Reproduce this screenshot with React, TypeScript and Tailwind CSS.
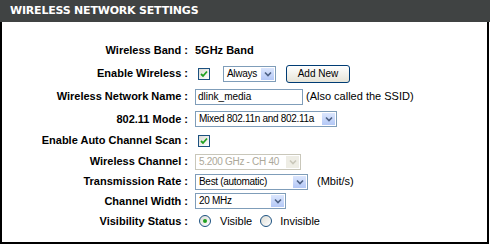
const font = { fontFamily: '"Liberation Sans", Arial, sans-serif' };

const Check = () => (
  <span className="flex h-[12px] w-[12px] items-center justify-center border border-[#1c5180] bg-gradient-to-br from-[#dcdcd5] to-white">
    <svg width="8" height="8" viewBox="0 0 8 8">
      <path d="M1 4 L3 6 L7 1.5" fill="none" stroke="#21a121" strokeWidth="1.8" />
    </svg>
  </span>
);

const Arrow = ({ disabled }: { disabled?: boolean }) => (
  <span
    className={
      "flex h-full w-[15px] shrink-0 items-center justify-center border border-white " +
      (disabled ? "bg-[#eeede5]" : "bg-gradient-to-b from-[#dbe6fd] to-[#b4c8f6]")
    }
  >
    <svg width="8" height="6" viewBox="0 0 8 6">
      <path d="M1 1.5 L4 4.5 L7 1.5" fill="none" stroke={disabled ? "#c9c7ba" : "#4d6185"} strokeWidth="1.6" />
    </svg>
  </span>
);

const Select = ({ w, text, disabled }: { w: string; text: string; disabled?: boolean }) => (
  <div
    className={
      "flex h-[16px] items-stretch border bg-white " +
      w +
      (disabled ? " border-[#c9c7ba] text-[#aca899]" : " border-[#7f9db9] text-black")
    }
  >
    <span className="flex flex-1 items-center overflow-hidden whitespace-nowrap pl-[3px] text-[10px] leading-none tracking-[-0.3px]">
      {text}
    </span>
    <Arrow disabled={disabled} />
  </div>
);

const Radio = ({ on }: { on?: boolean }) => (
  <span className="flex h-[12px] w-[12px] items-center justify-center rounded-full border border-[#1c5180] bg-gradient-to-br from-[#dcdcd5] to-white">
    {on && <span className="h-[4px] w-[4px] rounded-full bg-[#21a121]" />}
  </span>
);

const Row = ({ h, label, children }: { h: string; label: string; children: React.ReactNode }) => (
  <div className={"grid grid-cols-[186px_1fr] items-center gap-x-[7px] " + h}>
    <div className="text-right text-[11px] font-bold whitespace-nowrap">{label}</div>
    <div className="flex items-center text-[11px]">{children}</div>
  </div>
);

export default function App() {
  return (
    <div className="h-[244px] w-[490px] bg-white text-black" style={font}>
      <div className="flex h-[22px] items-center bg-[#404343] pl-[10px]">
        <span
          className="text-[11px] font-bold tracking-[-0.2px] text-white"
          style={{ fontFamily: '"DejaVu Sans", Verdana, sans-serif' }}
        >
          WIRELESS NETWORK SETTINGS
        </span>
      </div>
      <div className="h-[222px] w-[489px] border-x-2 border-b-2 border-black pt-[16px]">
        <Row h="h-[24px]" label="Wireless Band :">
          <span className="font-bold">5GHz Band</span>
        </Row>
        <Row h="h-[23px]" label="Enable Wireless :">
          <span className="ml-[3px]">
            <Check />
          </span>
          <span className="ml-[13px]">
            <Select w="w-[53px]" text="Always" />
          </span>
          <button className="ml-[10px] h-[18px] w-[64px] rounded-[3px] border border-[#003c74] bg-gradient-to-b from-white to-[#e6e4d8] text-[10px]">
            Add New
          </button>
        </Row>
        <Row h="h-[23px]" label="Wireless Network Name :">
          <div className="flex h-[16px] w-[108px] items-center border border-[#7f9db9] pl-[2px] text-[10px]">
            dlink_media
          </div>
          <span className="ml-[3px]">(Also called the SSID)</span>
        </Row>
        <Row h="h-[22px]" label="802.11 Mode :">
          <Select w="w-[142px]" text="Mixed 802.11n and 802.11a" />
        </Row>
        <Row h="h-[21px]" label="Enable Auto Channel Scan :">
          <span className="ml-[3px]">
            <Check />
          </span>
        </Row>
        <Row h="h-[21px]" label="Wireless Channel :">
          <Select w="w-[106px]" text="5.200 GHz - CH 40" disabled />
        </Row>
        <Row h="h-[19px]" label="Transmission Rate :">
          <Select w="w-[113px]" text="Best (automatic)" />
          <span className="ml-[9px]">(Mbit/s)</span>
        </Row>
        <Row h="h-[20px]" label="Channel Width :">
          <Select w="w-[91px]" text="20 MHz" />
        </Row>
        <Row h="h-[20px]" label="Visibility Status :">
          <span className="ml-[4px]">
            <Radio on />
          </span>
          <span className="ml-[9px]">Visible</span>
          <span className="ml-[8px]">
            <Radio />
          </span>
          <span className="ml-[8px]">Invisible</span>
        </Row>
      </div>
    </div>
  );
}
